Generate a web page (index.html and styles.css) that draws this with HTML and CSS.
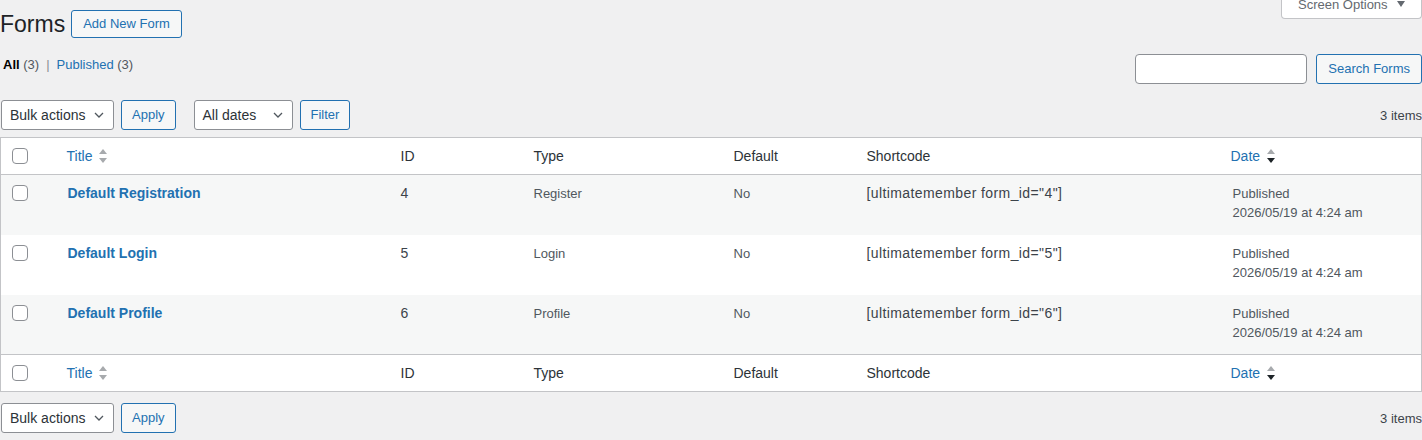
FILE: index.html
```html
<!DOCTYPE html>
<html lang="en">

<head>
    <meta charset="utf-8">
    <meta name="viewport" content="width=device-width, initial-scale=1.0">
    <title>Forms</title>

    <link rel="stylesheet" href="styles.css">
</head>

<body>

    <div class="screen-options">Screen Options <span class="tri"></span></div>

    <div class="wrap">
        <div class="title-row">
            <h1>Forms</h1>
            <a class="btn" href="#">Add New Form</a>
        </div>

        <div class="views-row">
            <ul class="views">
                <li class="current">All <span class="count">(3)</span></li>
                <li class="sep">|</li>
                <li><a href="#">Published</a> <span class="count">(3)</span></li>
            </ul>
            <div class="search">
                <input type="search">
                <button class="btn">Search Forms</button>
            </div>
        </div>

        <div class="tablenav">
            <div class="actions">
                <div class="select bulk">Bulk actions
                    <svg width="10" height="6" viewBox="0 0 10 6"><path d="M1 1l4 4 4-4" fill="none" stroke="#50575e" stroke-width="1.3"/></svg>
                </div>
                <button class="btn">Apply</button>
                <div class="select dates">All dates
                    <svg width="10" height="6" viewBox="0 0 10 6"><path d="M1 1l4 4 4-4" fill="none" stroke="#50575e" stroke-width="1.3"/></svg>
                </div>
                <button class="btn">Filter</button>
            </div>
            <div class="num">3 items</div>
        </div>

        <table class="list">
            <colgroup>
                <col style="width: 56px">
                <col style="width: 334px">
                <col style="width: 133px">
                <col style="width: 200px">
                <col style="width: 133px">
                <col style="width: 364px">
                <col>
            </colgroup>
            <thead>
                <tr>
                    <th class="cb"><input type="checkbox"></th>
                    <th><a href="#">Title</a>
                        <svg class="sort" width="8" height="16" viewBox="0 0 8 16"><path d="M4 1l4 5H0z" fill="#a7aaad"/><path d="M0 10h8l-4 5z" fill="#a7aaad"/></svg>
                    </th>
                    <th>ID</th>
                    <th>Type</th>
                    <th>Default</th>
                    <th>Shortcode</th>
                    <th><a href="#">Date</a>
                        <svg class="sort" width="8" height="16" viewBox="0 0 8 16"><path d="M4 1l4 5H0z" fill="#a7aaad"/><path d="M0 10h8l-4 5z" fill="#1d2327"/></svg>
                    </th>
                </tr>
            </thead>
            <tbody>
                <tr>
                    <th class="cb"><input type="checkbox"></th>
                    <td><a class="row-title" href="#">Default Registration</a></td>
                    <td class="id">4</td>
                    <td>Register</td>
                    <td>No</td>
                    <td class="code">[ultimatemember form_id="4"]</td>
                    <td class="date">Published<br>2026/05/19 at 4:24 am</td>
                </tr>
                <tr>
                    <th class="cb"><input type="checkbox"></th>
                    <td><a class="row-title" href="#">Default Login</a></td>
                    <td class="id">5</td>
                    <td>Login</td>
                    <td>No</td>
                    <td class="code">[ultimatemember form_id="5"]</td>
                    <td class="date">Published<br>2026/05/19 at 4:24 am</td>
                </tr>
                <tr>
                    <th class="cb"><input type="checkbox"></th>
                    <td><a class="row-title" href="#">Default Profile</a></td>
                    <td class="id">6</td>
                    <td>Profile</td>
                    <td>No</td>
                    <td class="code">[ultimatemember form_id="6"]</td>
                    <td class="date">Published<br>2026/05/19 at 4:24 am</td>
                </tr>
            </tbody>
            <tfoot>
                <tr>
                    <th class="cb"><input type="checkbox"></th>
                    <th><a href="#">Title</a>
                        <svg class="sort" width="8" height="16" viewBox="0 0 8 16"><path d="M4 1l4 5H0z" fill="#a7aaad"/><path d="M0 10h8l-4 5z" fill="#a7aaad"/></svg>
                    </th>
                    <th>ID</th>
                    <th>Type</th>
                    <th>Default</th>
                    <th>Shortcode</th>
                    <th><a href="#">Date</a>
                        <svg class="sort" width="8" height="16" viewBox="0 0 8 16"><path d="M4 1l4 5H0z" fill="#a7aaad"/><path d="M0 10h8l-4 5z" fill="#1d2327"/></svg>
                    </th>
                </tr>
            </tfoot>
        </table>

        <div class="tablenav bottom">
            <div class="actions">
                <div class="select bulk">Bulk actions
                    <svg width="10" height="6" viewBox="0 0 10 6"><path d="M1 1l4 4 4-4" fill="none" stroke="#50575e" stroke-width="1.3"/></svg>
                </div>
                <button class="btn">Apply</button>
            </div>
            <div class="num">3 items</div>
        </div>
    </div>

</body>

</html>
```

FILE: styles.css
```css
body {
    margin: 0;
    background: #f0f0f1;
    color: #3c434a;
    font-family: "Liberation Sans", Arial, sans-serif;
    font-size: 13px;
    position: relative;
}

a {
    color: #2271b1;
    text-decoration: none;
}

.screen-options {
    position: absolute;
    top: -8px;
    right: 0;
    width: 141px;
    box-sizing: border-box;
    padding: 3px 0 3px 16px;
    line-height: 20px;
    background: #fff;
    border: 1px solid #c3c4c7;
    border-top: none;
    border-radius: 0 0 4px 4px;
    color: #646970;
}

.screen-options .tri {
    display: inline-block;
    margin-left: 6px;
    border-left: 4px solid transparent;
    border-right: 4px solid transparent;
    border-top: 6px solid #646970;
    vertical-align: 2px;
}

.wrap {
    padding-top: 9px;
}

.title-row {
    display: flex;
    align-items: center;
    gap: 6px;
}

h1 {
    margin: 0;
    font-size: 23px;
    font-weight: 400;
    line-height: 30px;
    color: #1d2327;
}

.btn {
    display: inline-block;
    box-sizing: border-box;
    height: 30px;
    padding: 0 10px;
    border: 1px solid #2271b1;
    border-radius: 3px;
    background: #f6f7f7;
    color: #2271b1;
    font-family: inherit;
    font-size: 13px;
    line-height: 28px;
}

.title-row .btn {
    height: 28px;
    line-height: 26px;
    padding: 0 11px;
}

.views-row {
    display: flex;
    justify-content: space-between;
    align-items: flex-start;
    margin-top: 15px;
}

.views {
    display: flex;
    gap: 7px;
    list-style: none;
    margin: 1px 0 0 3px;
    padding: 0;
    line-height: 20px;
    color: #646970;
}

.views .current {
    color: #000;
    font-weight: 600;
}

.views .count {
    color: #50575e;
    font-weight: 400;
}

.views .sep {
    color: #8c8f94;
}

.search {
    display: flex;
    gap: 9px;
}

.search input {
    box-sizing: border-box;
    width: 172px;
    height: 30px;
    margin: 0;
    border: 1px solid #8c8f94;
    border-radius: 4px;
    background: #fff;
}

.search .btn {
    padding: 0 11px;
}

.tablenav {
    display: flex;
    justify-content: space-between;
    align-items: center;
    height: 30px;
    margin: 16px 0 7px;
}

.tablenav.bottom {
    margin: 11px 0 0;
}

.actions {
    display: flex;
    align-items: center;
    gap: 7px;
    padding-left: 1px;
}

.select {
    display: flex;
    justify-content: space-between;
    align-items: center;
    box-sizing: border-box;
    height: 30px;
    padding: 0 9px 0 8px;
    border: 1px solid #8c8f94;
    border-radius: 3px;
    background: #fff;
    color: #2c3338;
    font-size: 14px;
}

.select.bulk {
    width: 113px;
}

.select.dates {
    width: 99px;
    margin-left: 11px;
}

.num {
    color: #3c434a;
}

.list {
    width: 100%;
    table-layout: fixed;
    border-collapse: collapse;
    border: 1px solid #c3c4c7;
    background: #fff;
}

.list th {
    padding: 8px 10px;
    text-align: left;
    font-weight: 400;
    font-size: 14px;
    line-height: 20px;
    color: #2c3338;
}

.list thead th {
    border-bottom: 1px solid #c3c4c7;
}

.list tfoot th {
    border-top: 1px solid #c3c4c7;
}

.list .sort {
    vertical-align: -3px;
    margin-left: 3px;
}

.list td {
    padding: 9px 10px 7px;
    vertical-align: top;
    line-height: 19px;
    color: #50575e;
}

.list tbody tr {
    height: 60px;
}

.list tbody tr:nth-child(odd) {
    background: #f6f7f7;
}

.list .cb {
    padding: 10px 0 0 11px;
    vertical-align: top;
}

input[type="checkbox"] {
    appearance: none;
    display: block;
    width: 16px;
    height: 16px;
    margin: 0;
    border: 1px solid #8c8f94;
    border-radius: 4px;
    background: #fff;
}

.row-title {
    margin-left: 1px;
    font-size: 14px;
    font-weight: 700;
}

.list td.id {
    font-size: 14px;
    color: #3c434a;
}

.list td.code {
    font-size: 14px;
    letter-spacing: 0.4px;
    color: #3c434a;
}

.list td.date {
    padding-left: 12px;
}
```
